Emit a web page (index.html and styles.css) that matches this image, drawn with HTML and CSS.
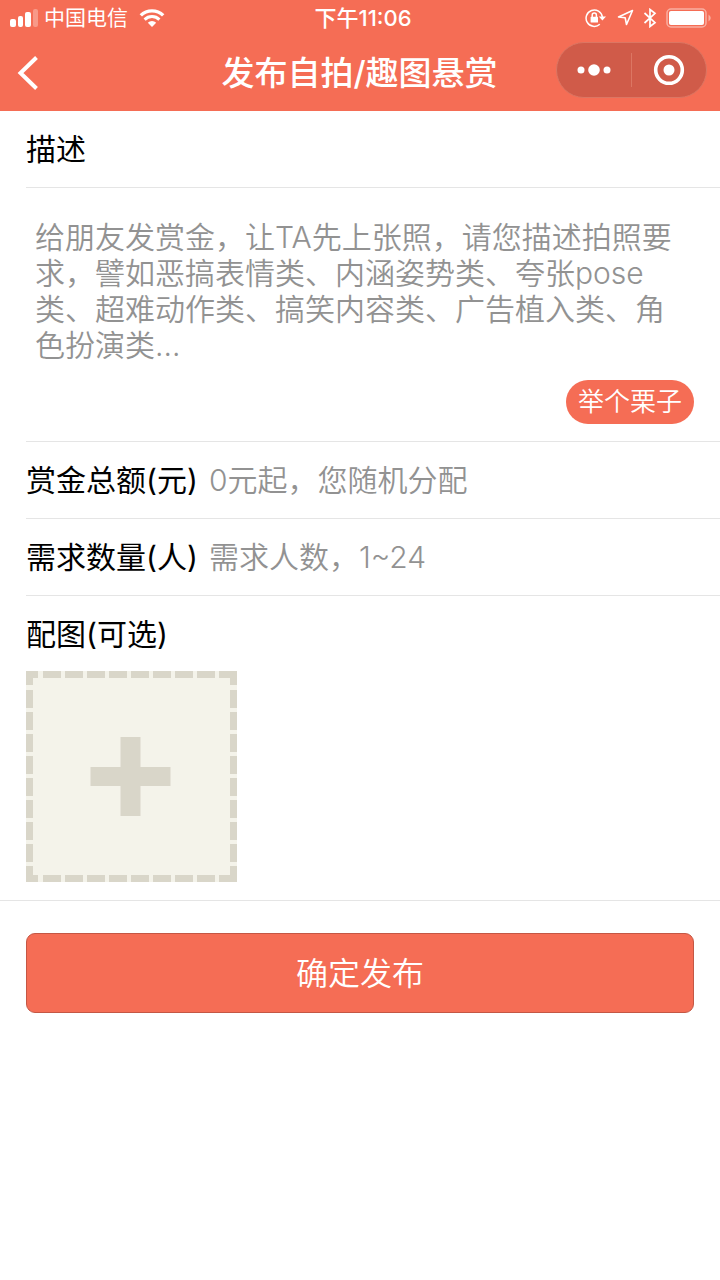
FILE: index.html
```html
<!DOCTYPE html>
<html lang="zh-CN">
<head>
<meta charset="utf-8">
<meta name="viewport" content="width=device-width, initial-scale=1">
<title>发布自拍/趣图悬赏</title>
<link rel="stylesheet" href="styles.css">
</head>
<body>
<header class="header">
  <div class="status">
    <div class="status-left">
      <svg class="signal" width="28" height="18" viewBox="0 0 28 18" fill="#fff" aria-hidden="true">
        <rect x="0" y="10" width="6" height="8" rx="2"/>
        <rect x="8" y="7" width="5" height="11" rx="2"/>
        <rect x="15" y="3" width="6" height="15" rx="2"/>
        <rect x="23" y="0" width="5" height="18" rx="2" opacity=".3"/>
      </svg>
      <span class="carrier">中国电信</span>
      <svg width="26" height="19" viewBox="0 0 26 19" fill="none" stroke="#fff" aria-hidden="true">
        <path d="M1.800 6.400A16 16 0 0 1 24.200 6.400" stroke-width="3.400"/>
        <path d="M5.600 10.600A10.500 10.500 0 0 1 20.400 10.600" stroke-width="3"/>
        <path d="M13 18L8.800 13.800A6 6 0 0 1 17.200 13.800Z" fill="#fff" stroke="none"/>
      </svg>
    </div>
    <time class="clock">下午11:06</time>
    <div class="status-right">
      <svg width="21" height="20" viewBox="0 0 21 20" fill="none" stroke="#fff" stroke-width="1.500" aria-hidden="true">
        <path d="M14.800 16.300A8.200 8.200 0 1 1 17.400 9"/>
        <path d="M13.800 8.500H21L17.400 12.500Z" fill="#fff" stroke="none"/>
        <rect x="5.600" y="8.800" width="7.400" height="5.800" rx=".6" fill="#fff" stroke="none"/>
        <path d="M7.200 9V7.200a2.100 2.100 0 0 1 4.200 0V9"/>
      </svg>
      <svg class="location" width="17" height="18" viewBox="0 0 17 18" fill="none" stroke="#fff" stroke-width="1.600" stroke-linejoin="round" aria-hidden="true">
        <path d="M15.500 1.500L1.500 8L8.200 8.800L9.500 15.500Z"/>
      </svg>
      <svg class="bluetooth" width="14" height="20" viewBox="0 0 14 20" fill="none" stroke="#fff" stroke-width="1.700" aria-hidden="true">
        <path d="M1.500 5L12 14.600L7 18.500V1.500L12 5.400L1.500 15"/>
      </svg>
      <svg width="46" height="20" viewBox="0 0 46 20" fill="none" aria-hidden="true">
        <rect x="1" y="1" width="39" height="18" rx="4" stroke="#fff" stroke-opacity=".45" stroke-width="1.500"/>
        <rect x="3" y="3" width="35" height="14" rx="2" fill="#fff"/>
        <path d="M42.500 6.500Q47 10 42.500 13.500Z" fill="#fff" fill-opacity=".45"/>
      </svg>
    </div>
  </div>
  <nav class="nav">
    <button class="back" type="button" aria-label="返回">
      <svg width="22" height="36" viewBox="0 0 22 36" fill="none" stroke="#fff" stroke-width="4" aria-hidden="true">
        <path d="M19.500 2.500L3.500 18L19.500 33.500"/>
      </svg>
    </button>
    <h1 class="title">发布自拍/趣图悬赏</h1>
    <div class="capsule">
      <button class="capsule-btn" type="button" aria-label="更多">
        <svg width="34" height="12" viewBox="0 0 34 12" fill="#fff" aria-hidden="true">
          <circle cx="4" cy="6" r="3.500"/><circle cx="17" cy="6" r="5.800"/><circle cx="30" cy="6" r="3.500"/>
        </svg>
      </button>
      <button class="capsule-btn" type="button" aria-label="关闭">
        <svg width="32" height="32" viewBox="0 0 32 32" aria-hidden="true">
          <circle cx="16" cy="16" r="13.300" fill="none" stroke="#fff" stroke-width="3.600"/><circle cx="16" cy="16" r="5.500" fill="#fff"/>
        </svg>
      </button>
    </div>
  </nav>
</header>
<main>
  <form class="form">
    <div class="fields">
      <div class="row"><label for="desc">描述</label></div>
      <div class="desc">
        <textarea id="desc" class="desc-input" placeholder="给朋友发赏金，让TA先上张照，请您描述拍照要求，譬如恶搞表情类、内涵姿势类、夸张pose类、超难动作类、搞笑内容类、广告植入类、角色扮演类..."></textarea>
        <button class="example" type="button">举个栗子</button>
      </div>
      <div class="row">
        <label for="amount">赏金总额(元)</label>
        <input id="amount" class="text-input" type="text" placeholder="0元起，您随机分配">
      </div>
      <div class="row">
        <label for="count">需求数量(人)</label>
        <input id="count" class="text-input" type="text" placeholder="需求人数，1~24">
      </div>
      <div class="row row-last"><span>配图(可选)</span></div>
      <button class="upload" type="button" aria-label="添加图片">
        <svg width="211" height="211" viewBox="0 0 211 211" aria-hidden="true">
          <rect width="211" height="211" fill="#f4f3ea"/>
          <g fill="none" stroke="#d9d6c9" stroke-width="7">
            <path d="M3.500 14V3.500H12M193 3.500H207.500V14M207.500 195V207.500H193M12 207.500H3.500V195"/>
            <path d="M17 3.500H190M17 207.500H190" stroke-dasharray="18 4"/>
            <path d="M3.500 19V191M207.500 19V191" stroke-dasharray="18 4"/>
          </g>
          <path d="M94.500 66h20v30h30v19h-30v30h-20v-30h-30v-19h30z" fill="#d9d6c9"/>
        </svg>
      </button>
    </div>
    <div class="actions"><button class="submit" type="submit">确定发布</button></div>
  </form>
</main>
</body>
</html>
```
FILE: styles.css
```css
* {
  box-sizing: border-box;
}

body {
  margin: 0;
  background: #fff;
  color: #000;
  font-family: Inter, "Noto Sans CJK SC", sans-serif;
  font-size: 30px;
}

button {
  padding: 0;
  border: 0;
  background: none;
  color: #fff;
  font-family: inherit;
  cursor: pointer;
}

svg {
  display: block;
}

.header {
  background: #f56d55;
  color: #fff;
}

.status {
  display: grid;
  grid-template-columns: 1fr auto 1fr;
  align-items: center;
  height: 36px;
  padding: 0 8px 0 10px;
  font-size: 21px;
  line-height: 36px;
}

.status-left,
.status-right {
  display: flex;
  align-items: center;
}

.carrier {
  margin: 0 11px 0 6px;
}

.clock {
  padding-left: 4px;
  font-size: 22px;
  font-weight: 500;
}

.status-right {
  justify-content: flex-end;
}

.location {
  margin: 0 9px 0 11px;
}

.bluetooth {
  margin-right: 9px;
}

.nav {
  display: grid;
  grid-template-columns: 1fr auto 1fr;
  align-items: start;
  height: 75px;
  padding: 6px 13px 0 17px;
}

.back {
  justify-self: start;
  display: flex;
  align-items: center;
  height: 62px;
}

.title {
  margin: 0;
  padding-right: 5px;
  font-size: 33px;
  font-weight: 500;
  line-height: 62px;
}

.capsule {
  justify-self: end;
  display: flex;
  align-items: center;
  width: 151px;
  height: 56px;
  border: 1px solid #dc7663;
  border-radius: 28px;
  background: #d05b49;
}

.capsule-btn {
  flex: 1;
  display: flex;
  align-items: center;
  justify-content: center;
  height: 34px;
}

.capsule-btn + .capsule-btn {
  border-left: 1px solid #dc7663;
}

.fields {
  padding-left: 26px;
  padding-bottom: 18px;
  border-bottom: 1px solid #e5e5e5;
}

.row {
  display: flex;
  align-items: center;
  gap: 11px;
  min-height: 77px;
  padding-right: 26px;
  border-bottom: 1px solid #e5e5e5;
}

.row label,
.row span {
  padding-bottom: 4px;
}

.row-last {
  min-height: 75px;
  border-bottom: 0;
}

.desc {
  display: flex;
  flex-direction: column;
  padding: 31px 26px 17px 9px;
  border-bottom: 1px solid #e5e5e5;
}

.desc-input,
.text-input {
  width: 100%;
  margin: 0;
  padding: 0;
  border: 0;
  outline: 0;
  background: none;
  color: #000;
  font-family: inherit;
  font-size: 30px;
}

.desc-input {
  height: 161px;
  padding-right: 8px;
  line-height: 36px;
  resize: none;
  overflow: hidden;
}

.text-input {
  flex: 1;
  min-width: 0;
  height: 44px;
}

.desc-input::placeholder,
.text-input::placeholder {
  color: #929292;
  font-weight: 350;
  opacity: 1;
}

.example {
  align-self: flex-end;
  height: 44px;
  padding: 0 12px;
  border-radius: 22px;
  background: #f56d55;
  font-size: 26px;
  font-weight: 350;
  line-height: 44px;
}

.upload {
  display: block;
}

.actions {
  padding: 32px 26px;
}

.submit {
  display: block;
  width: 100%;
  height: 80px;
  padding-bottom: 4px;
  border: 1px solid #c45744;
  border-radius: 9px;
  background: #f56d55;
  font-size: 32px;
  font-weight: 350;
}
```
